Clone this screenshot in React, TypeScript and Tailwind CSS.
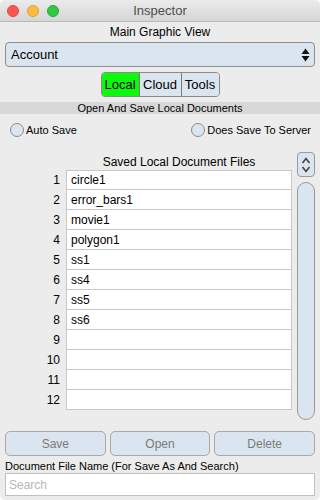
import React from "react";

const rows = ["circle1", "error_bars1", "movie1", "polygon1", "ss1", "ss4", "ss5", "ss6", "", "", "", ""];

export default function App() {
  return (
    <div className="w-[320px] h-[500px] bg-white" style={{ fontFamily: '"Liberation Sans", Arial, sans-serif' }}>
      <div className="w-[320px] h-[500px] bg-[#ececec] rounded-[5px] overflow-hidden flex flex-col text-black">
        {/* Title bar */}
        <div className="h-[22px] shrink-0 bg-gradient-to-b from-[#ebebeb] to-[#d5d5d5] border-b border-[#b9b9b9] flex items-center relative">
          <div className="flex items-center gap-[8px] pl-[7px]">
            <span className="w-[12px] h-[12px] rounded-full bg-[#fc5753] border border-[#df4744]" />
            <span className="w-[12px] h-[12px] rounded-full bg-[#fdbc40] border border-[#de9f34]" />
            <span className="w-[12px] h-[12px] rounded-full bg-[#33c748] border border-[#27aa35]" />
          </div>
          <div className="absolute inset-0 flex items-center justify-center text-[13px] text-[#4d4d4d]">Inspector</div>
        </div>

        <div className="h-[15px] mt-[2px] flex items-center justify-center text-[12px]">Main Graphic View</div>

        {/* Dropdown */}
        <div className="mx-[5px] mt-[3px] h-[25px] rounded-[4px] border border-[#8e8e8e] bg-[#dbe5ef] flex items-center justify-between pl-[5px] pr-[4px] text-[13px]">
          <span>Account</span>
          <svg width="9" height="14" viewBox="0 0 9 14">
            <path d="M4.5 0.5 L8.5 6 L0.5 6 Z" fill="#111" />
            <path d="M4.5 13.5 L8.5 8 L0.5 8 Z" fill="#111" />
          </svg>
        </div>

        {/* Segmented */}
        <div className="flex justify-center mt-[5px]">
          <div className="flex h-[25px] rounded-[4px] border border-[#8a8a8a] overflow-hidden text-[13px]">
            <div className="w-[38px] bg-[#0ef80e] flex items-center justify-center border-r border-[#7a7a7a]">Local</div>
            <div className="w-[42px] bg-[#dbe5ef] flex items-center justify-center border-r border-[#7a7a7a]">Cloud</div>
            <div className="w-[37px] bg-[#dbe5ef] flex items-center justify-center">Tools</div>
          </div>
        </div>

        {/* Section header */}
        <div className="mt-[5px] h-[12px] bg-[#d8d8d8] flex items-center justify-center text-[11px]">Open And Save Local Documents</div>

        {/* Radios */}
        <div className="mt-[9px] h-[14px] flex items-center justify-between pl-[10px] pr-[9px] text-[11px]">
          <div className="flex items-center gap-[2px]">
            <span className="w-[14px] h-[14px] rounded-full border border-[#8a8a8a] bg-[#dbe5ef]" />
            <span>Auto Save</span>
          </div>
          <div className="flex items-center gap-[2px]">
            <span className="w-[14px] h-[14px] rounded-full border border-[#8a8a8a] bg-[#dbe5ef]" />
            <span>Does Save To Server</span>
          </div>
        </div>

        {/* Table + scroller */}
        <div className="mt-[17px] flex pr-[5px]">
          <div className="flex-1 flex flex-col">
            <div className="h-[16px] pl-[66px] flex items-center justify-center text-[12px]">Saved Local Document Files</div>
            <div className="flex flex-col">
              {rows.map((r, i) => (
                <div key={i} className="flex h-[20px]">
                  <div className="w-[66px] pr-[6px] flex items-center justify-end text-[12px]">{i + 1}</div>
                  <div
                    className={
                      "w-[226px] bg-white border-x border-[#c8c8c8] border-b flex items-center pl-[4px] text-[12px] " +
                      (i === 0 ? "border-t" : "")
                    }
                  >
                    {r}
                  </div>
                </div>
              ))}
            </div>
          </div>
          <div className="w-[18px] ml-[5px] flex flex-col">
            <div className="h-[25px] mt-[-2px] rounded-[4px] border border-[#9a9a9a] bg-[#dbe5ef] flex items-center justify-center">
              <svg width="10" height="18" viewBox="0 0 10 18">
                <path d="M1.5 7 L5 2.5 L8.5 7" stroke="#444" strokeWidth="1.6" fill="none" />
                <path d="M1.5 11 L5 15.5 L8.5 11" stroke="#444" strokeWidth="1.6" fill="none" />
              </svg>
            </div>
            <div className="mt-[5px] h-[238px] rounded-full border border-[#9a9a9a] bg-[#dbe5ef]" />
          </div>
        </div>

        {/* Buttons */}
        <div className="mt-[11px] px-[5px] flex gap-[4px] text-[12px] text-[#7a7a7a]">
          <div className="flex-1 h-[25px] rounded-[5px] border border-[#a9a9a9] bg-[#dbe5ef] flex items-center justify-center">Save</div>
          <div className="flex-1 h-[25px] rounded-[5px] border border-[#a9a9a9] bg-[#dbe5ef] flex items-center justify-center">Open</div>
          <div className="flex-1 h-[25px] rounded-[5px] border border-[#a9a9a9] bg-[#dbe5ef] flex items-center justify-center">Delete</div>
        </div>

        <div className="mt-[3px] px-[5px] h-[14px] flex items-center text-[11px]">Document File Name (For Save As And Search)</div>
        <div className="mx-[5px] mt-0 h-[23px] bg-white border border-[#c0c0c0] flex items-center pl-[3px] text-[12px] text-[#b8b8b8]">Search</div>
      </div>
    </div>
  );
}
